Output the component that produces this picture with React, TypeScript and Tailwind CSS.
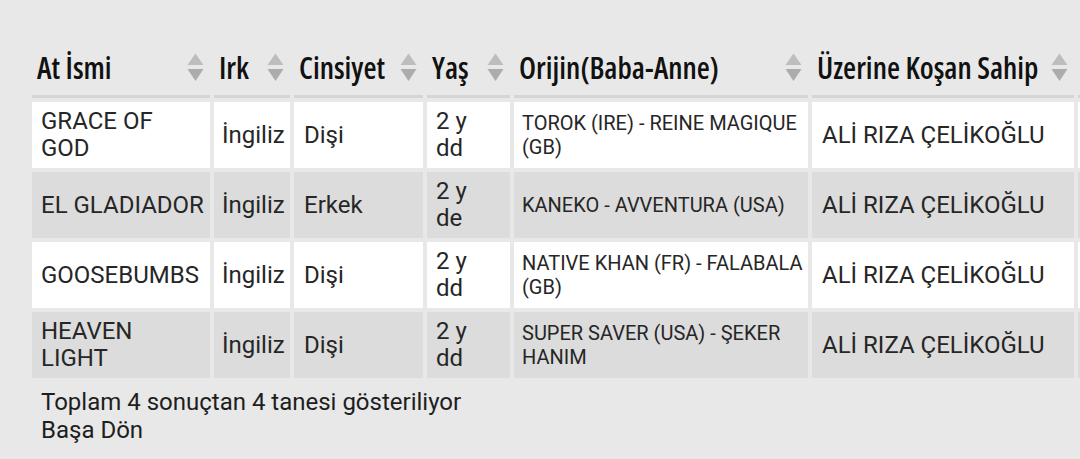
import React from "react";

const rows = [
  { name: ["GRACE OF", "GOD"], irk: "İngiliz", cins: "Dişi", yas: ["2 y", "dd"], orijin: ["TOROK (IRE) - REINE MAGIQUE", "(GB)"], sahip: "ALİ RIZA ÇELİKOĞLU" },
  { name: ["EL GLADIADOR"], irk: "İngiliz", cins: "Erkek", yas: ["2 y", "de"], orijin: ["KANEKO - AVVENTURA (USA)"], sahip: "ALİ RIZA ÇELİKOĞLU" },
  { name: ["GOOSEBUMBS"], irk: "İngiliz", cins: "Dişi", yas: ["2 y", "dd"], orijin: ["NATIVE KHAN (FR) - FALABALA", "(GB)"], sahip: "ALİ RIZA ÇELİKOĞLU" },
  { name: ["HEAVEN", "LIGHT"], irk: "İngiliz", cins: "Dişi", yas: ["2 y", "dd"], orijin: ["SUPER SAVER (USA) - ŞEKER", "HANIM"], sahip: "ALİ RIZA ÇELİKOĞLU" },
];

function SortIcon() {
  return (
    <svg width="17" height="30" viewBox="0 0 17 30" className="shrink-0">
      <path d="M8.5 0.5 L16.5 12 L0.5 12 Z" fill="#bdbdbd" />
      <path d="M0.5 16 L16.5 16 L8.5 28 Z" fill="#acacac" />
    </svg>
  );
}

function Th({ label, last }: { label: string; last?: boolean }) {
  return (
    <th className="p-0 align-bottom border-b-[3px] border-[#d5d5d5] text-left font-normal">
      {last ? (
        <div className="h-[53px]" />
      ) : (
        <div className="h-[53px] flex items-center justify-between pl-[5px] pr-[6px] pb-[2px]">
          <span
            className="text-[30px] leading-[34px] font-semibold font-stretch-[75%] text-[#111111] whitespace-nowrap"
            style={{ fontFamily: "'Open Sans', 'DejaVu Sans Condensed', sans-serif" }}
          >
            {label}
          </span>
          <SortIcon />
        </div>
      )}
    </th>
  );
}

function Lines({ lines }: { lines: string[] }) {
  return (
    <>
      {lines.map((l, i) => (
        <div key={i}>{l}</div>
      ))}
    </>
  );
}

export default function App() {
  return (
    <div
      className="w-[1080px] h-[459px] overflow-hidden bg-[#e8e8e8] text-[#262626]"
      style={{ fontFamily: "Roboto, 'Noto Sans', sans-serif" }}
    >
      <div className="pt-[38px] pl-[28px]">
        <table className="table-fixed border-separate border-spacing-[4px] w-[1204px]">
          <colgroup>
            <col className="w-[178px]" />
            <col className="w-[76px]" />
            <col className="w-[129px]" />
            <col className="w-[83px]" />
            <col className="w-[294px]" />
            <col className="w-[262px]" />
            <col className="w-[150px]" />
          </colgroup>
          <thead>
            <tr>
              <Th label="At İsmi" />
              <Th label="Irk" />
              <Th label="Cinsiyet" />
              <Th label="Yaş" />
              <Th label="Orijin(Baba-Anne)" />
              <Th label="Üzerine Koşan Sahip" />
              <Th label="" last />
            </tr>
          </thead>
          <tbody>
            {rows.map((r, i) => {
              const bg = i % 2 === 0 ? "bg-white" : "bg-[#dcdcdc]";
              return (
                <tr key={i} className="text-[24px] leading-[27px]">
                  <td className={`${bg} h-[66px] pl-[9px] pr-0 align-middle whitespace-nowrap`}>
                    <Lines lines={r.name} />
                  </td>
                  <td className={`${bg} h-[66px] pl-[8px] pr-0 align-middle whitespace-nowrap`}>{r.irk}</td>
                  <td className={`${bg} h-[66px] pl-[10px] align-middle`}>{r.cins}</td>
                  <td className={`${bg} h-[66px] pl-[9px] align-middle`}>
                    <Lines lines={r.yas} />
                  </td>
                  <td className={`${bg} h-[66px] pl-[8px] align-middle text-[20px] leading-[24px] whitespace-nowrap`}>
                    <Lines lines={r.orijin} />
                  </td>
                  <td className={`${bg} h-[66px] pl-[10px] align-middle whitespace-nowrap`}>{r.sahip}</td>
                  <td className={`${bg} h-[66px]`} />
                </tr>
              );
            })}
          </tbody>
        </table>
        <div className="pl-[13px] pt-[6px] text-[24px] leading-[28px] text-[#1e1e1e]">
          <div>Toplam 4 sonuçtan 4 tanesi gösteriliyor</div>
          <div>Başa Dön</div>
        </div>
      </div>
    </div>
  );
}
